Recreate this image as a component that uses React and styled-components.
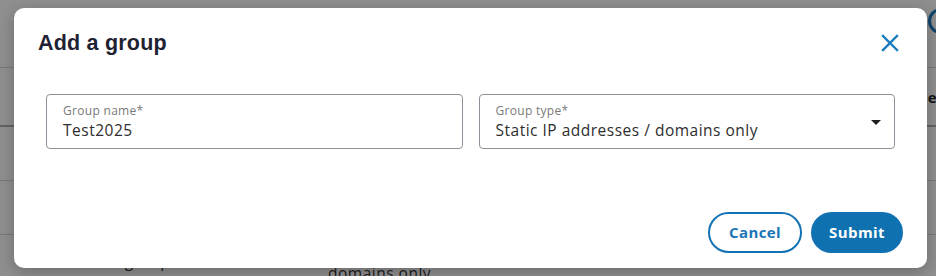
import React from "react";
import styled, { createGlobalStyle } from "styled-components";

const Global = createGlobalStyle`
  html, body { margin: 0; padding: 0; }
  body { width: 936px; height: 276px; overflow: hidden; background: #fff; font-family: "Open Sans", "Liberation Sans", sans-serif; }
`;

const Page = styled.div`
  position: relative;
  width: 936px;
  height: 276px;
  overflow: hidden;
  background: #fff;
`;

const TopBar = styled.div`
  height: 68px;
  border-bottom: 1px solid #d6d6d6;
  box-sizing: border-box;
  display: flex;
  align-items: center;
  padding-left: 928px;
`;

const RoundIcon = styled.div`
  flex: none;
  width: 20px;
  height: 20px;
  border-radius: 50%;
  border: 3px solid #1a7bbd;
  margin-top: -26px;
`;

const HeadRow = styled.div`
  height: 59px;
  box-sizing: border-box;
  border-bottom: 2px solid #b0b0b0;
  display: flex;
  align-items: center;
  padding-left: 906px;
  white-space: nowrap;
  font-weight: 700;
  font-size: 15px;
  color: #222;
`;

const Row = styled.div`
  height: 54px;
  box-sizing: border-box;
  border-bottom: 1px solid #d6d6d6;
`;

const LastRow = styled.div`
  display: flex;
  align-items: flex-start;
  padding: 5px 0 0 88px;
  font-size: 15.5px;
  letter-spacing: 0.5px;
  line-height: 22px;
  color: #333;
`;

const Cell = styled.span`
  width: ${(p) => p.$w}px;
  margin-top: ${(p) => p.$offset || 0}px;
  flex: none;
`;

const Overlay = styled.div`
  position: absolute;
  inset: 0;
  background: rgba(0, 0, 0, 0.44);
`;

const Dialog = styled.div`
  position: absolute;
  left: 14px;
  top: 8px;
  width: 913px;
  height: 260px;
  box-sizing: border-box;
  background: #fff;
  border-radius: 10px;
  box-shadow: 0 4px 16px rgba(0, 0, 0, 0.25);
  padding: 20px 24px 15px 24px;
  display: flex;
  flex-direction: column;
`;

const Header = styled.div`
  display: flex;
  align-items: center;
  justify-content: space-between;
  height: 30px;
`;

const Title = styled.h2`
  margin: 0;
  font-family: "Liberation Sans", Arial, sans-serif;
  font-weight: 700;
  font-size: 21.5px;
  letter-spacing: 0.2px;
  color: #1f2232;
`;

const CloseBtn = styled.button`
  border: none;
  background: none;
  padding: 0;
  width: 24px;
  height: 24px;
  display: flex;
  align-items: center;
  justify-content: center;
  margin-right: 1px;
  cursor: pointer;
`;

const Fields = styled.div`
  display: grid;
  grid-template-columns: 1fr 1fr;
  gap: 16px;
  padding: 36px 8px 0 8px;
`;

const Field = styled.div`
  position: relative;
  height: 55px;
  box-sizing: border-box;
  border: 1px solid #8c9098;
  border-radius: 4px;
  padding: 7px 16px 0 16px;
  display: flex;
  flex-direction: column;
`;

const Label = styled.span`
  font-size: 12px;
  color: #7a7a7a;
  line-height: 17px;
  letter-spacing: 0.3px;
`;

const Value = styled.span`
  font-size: 15.5px;
  color: #2e2e2e;
  line-height: 22px;
  letter-spacing: 0.5px;
`;

const Caret = styled.span`
  position: absolute;
  right: 13px;
  top: 25px;
  width: 0;
  height: 0;
  border-left: 5px solid transparent;
  border-right: 5px solid transparent;
  border-top: 5px solid #1f1f1f;
`;

const Footer = styled.div`
  margin-top: auto;
  display: flex;
  justify-content: flex-end;
  gap: 9px;
`;

const Button = styled.button`
  height: 41px;
  width: ${(p) => p.$w}px;
  border-radius: 21px;
  box-sizing: border-box;
  padding: 0 0 2px 0;
  font-family: "Open Sans", sans-serif;
  font-weight: 700;
  font-size: 15px;
  letter-spacing: 0.4px;
  border: 2px solid #1372b3;
  background: ${(p) => (p.$primary ? "#0f71b0" : "#fff")};
  color: ${(p) => (p.$primary ? "#fff" : "#1a76b6")};
  cursor: pointer;
`;

export default function App() {
  return (
    <>
      <Global />
      <Page>
        <TopBar>
          <RoundIcon />
        </TopBar>
        <HeadRow>Selected</HeadRow>
        <Row />
        <Row />
        <LastRow>
          <Cell $w={240} $offset={10}>Test group</Cell>
          <Cell $w={180}>Static IP addresses / domains only</Cell>
        </LastRow>
        <Overlay />
        <Dialog role="dialog" aria-label="Add a group">
          <Header>
            <Title>Add a group</Title>
            <CloseBtn aria-label="Close">
              <svg width="18" height="18" viewBox="0 0 18 18">
                <path d="M2 2 L16 16 M16 2 L2 16" stroke="#1a7bbd" strokeWidth="2.4" strokeLinecap="square" />
              </svg>
            </CloseBtn>
          </Header>
          <Fields>
            <Field>
              <Label>Group name*</Label>
              <Value>Test2025</Value>
            </Field>
            <Field>
              <Label>Group type*</Label>
              <Value>Static IP addresses / domains only</Value>
              <Caret />
            </Field>
          </Fields>
          <Footer>
            <Button $w={94}>Cancel</Button>
            <Button $w={92} $primary>Submit</Button>
          </Footer>
        </Dialog>
      </Page>
    </>
  );
}
